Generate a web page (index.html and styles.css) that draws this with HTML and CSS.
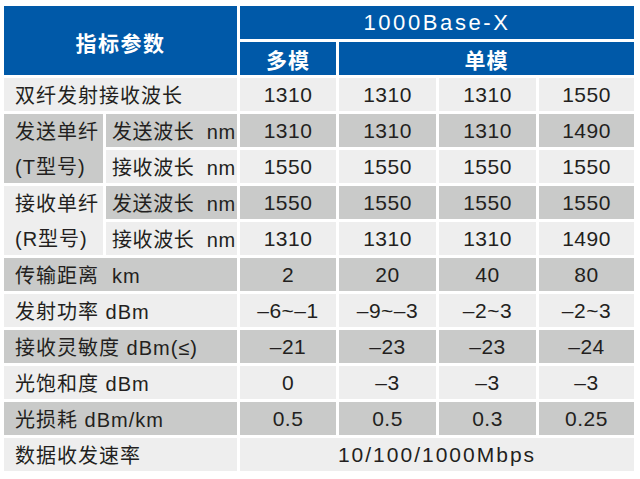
FILE: index.html
```html
<!DOCTYPE html>
<html lang="zh">
<head>
<meta charset="utf-8">
<link rel="stylesheet" href="styles.css">
</head>
<body>
<div class="spec">
  <div class="c hd title">指标参数</div>
  <div class="c hd base">1000Base-X</div>
  <div class="c hd mm">多模</div>
  <div class="c hd sm">单模</div>

  <div class="c lt lab wide">双纤发射接收波长</div>
  <div class="c lt num">1310</div><div class="c lt num">1310</div><div class="c lt num">1310</div><div class="c lt num">1550</div>

  <div class="c dk lab group"><span>发送单纤</span><span>(T型号)</span></div>
  <div class="c dk lab sub">发送波长&nbsp; nm</div>
  <div class="c dk num">1310</div><div class="c dk num">1310</div><div class="c dk num">1310</div><div class="c dk num">1490</div>
  <div class="c lt lab sub">接收波长&nbsp; nm</div>
  <div class="c lt num">1550</div><div class="c lt num">1550</div><div class="c lt num">1550</div><div class="c lt num">1550</div>

  <div class="c lt lab group"><span>接收单纤</span><span>(R型号)</span></div>
  <div class="c dk lab sub">发送波长&nbsp; nm</div>
  <div class="c dk num">1550</div><div class="c dk num">1550</div><div class="c dk num">1550</div><div class="c dk num">1550</div>
  <div class="c lt lab sub">接收波长&nbsp; nm</div>
  <div class="c lt num">1310</div><div class="c lt num">1310</div><div class="c lt num">1310</div><div class="c lt num">1490</div>

  <div class="c dk lab wide">传输距离&nbsp; km</div>
  <div class="c dk num">2</div><div class="c dk num">20</div><div class="c dk num">40</div><div class="c dk num">80</div>

  <div class="c lt lab wide">发射功率 dBm</div>
  <div class="c lt num">–6~–1</div><div class="c lt num">–9~–3</div><div class="c lt num">–2~3</div><div class="c lt num">–2~3</div>

  <div class="c dk lab wide">接收灵敏度 dBm(≤)</div>
  <div class="c dk num">–21</div><div class="c dk num">–23</div><div class="c dk num">–23</div><div class="c dk num">–24</div>

  <div class="c lt lab wide">光饱和度 dBm</div>
  <div class="c lt num">0</div><div class="c lt num">–3</div><div class="c lt num">–3</div><div class="c lt num">–3</div>

  <div class="c dk lab wide">光损耗 dBm/km</div>
  <div class="c dk num">0.5</div><div class="c dk num">0.5</div><div class="c dk num">0.3</div><div class="c dk num">0.25</div>

  <div class="c lt lab wide">数据收发速率</div>
  <div class="c lt num rate">10/100/1000Mbps</div>
</div>
</body>
</html>
```

FILE: styles.css
```css
html, body {
  margin: 0;
  padding: 0;
  background: #ffffff;
}
body {
  width: 640px;
  height: 479px;
  overflow: hidden;
  font-family: "Liberation Sans", "Noto Sans CJK SC", sans-serif;
  color: #231f20;
}
.spec {
  display: grid;
  grid-template-columns: 99px 131px 96px 97px 97px 95px;
  grid-auto-rows: 33px;
  column-gap: 3px;
  row-gap: 3px;
  padding: 6px 0 0 4px;
}
.c {
  display: flex;
  align-items: center;
  font-size: 20px;
  letter-spacing: 1px;
  white-space: nowrap;
}
.hd {
  background: #0059a8;
  color: #ffffff;
  justify-content: center;
}
.title {
  grid-column: 1 / 3;
  grid-row: 1 / 3;
  font-weight: bold;
  font-size: 21px;
  letter-spacing: 1.5px;
  padding-top: 3px;
}
.base {
  grid-column: 3 / 7;
  font-size: 22px;
  letter-spacing: 2.6px;
}
.mm {
  grid-column: 3 / 4;
  font-weight: bold;
  font-size: 21px;
  letter-spacing: 1px;
}
.sm {
  grid-column: 4 / 7;
  font-weight: bold;
  font-size: 21px;
  letter-spacing: 1px;
}
.lt { background: #eeeeee; }
.dk { background: #c9cac9; }
.lab { padding-left: 11px; }
.wide { grid-column: 1 / 3; }
.sub {
  grid-column: 2 / 3;
  padding-left: 6px;
  letter-spacing: 0.6px;
}
.group {
  grid-row: span 2;
  flex-direction: column;
  align-items: flex-start;
  justify-content: flex-start;
}
.group span {
  display: flex;
  align-items: center;
  height: 36px;
  margin-top: -1px;
}
.num {
  justify-content: center;
  font-size: 21px;
  letter-spacing: 0.5px;
}
.rate {
  grid-column: 3 / 7;
  letter-spacing: 2px;
}
```
